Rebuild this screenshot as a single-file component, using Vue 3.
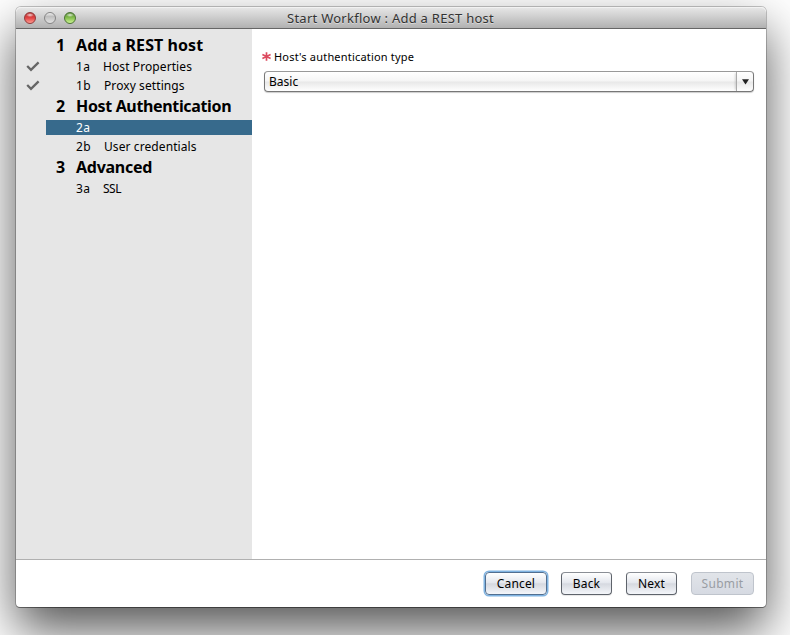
<script setup>
const groups = [
  { n: '1', title: 'Add a REST host', cls: 't-rest', items: [
    { n: '1a', label: 'Host Properties', done: true },
    { n: '1b', label: 'Proxy settings', done: true },
  ] },
  { n: '2', title: 'Host Authentication', cls: 't-auth', items: [
    { n: '2a', label: '', active: true },
    { n: '2b', label: 'User credentials' },
  ] },
  { n: '3', title: 'Advanced', cls: 't-adv', items: [{ n: '3a', label: 'SSL', tight: true }] },
]
</script>

<template>
  <div class="desktop">
    <div class="window">
      <header class="titlebar">
        <div class="lights">
          <i class="light red"></i><i class="light gray"></i><i class="light green"></i>
        </div>
        <span class="title">Start Workflow : Add a REST host</span>
      </header>
      <div class="content">
        <nav class="steps">
          <template v-for="g in groups" :key="g.n">
            <div class="group"><span class="gnum">{{ g.n }}</span><span :class="g.cls">{{ g.title }}</span></div>
            <div v-for="s in g.items" :key="s.n" class="step">
              <span class="mark">
                <svg v-if="s.done" width="14" height="12" viewBox="0 0 14 12"><path d="M1.2 5 L5 8.8 L12.6 1.4" fill="none" stroke="#666" stroke-width="2.3" /></svg>
              </span>
              <span class="row" :class="{ active: s.active }"><span class="snum" :class="{ b: s.n.endsWith('b') }">{{ s.n }}</span><span :class="{ tight: s.tight }">{{ s.label }}</span></span>
            </div>
          </template>
        </nav>
        <main class="form">
          <label class="label">
            <svg width="9" height="9" viewBox="0 0 9 9"><path d="M4.5 0.3V8.7M0.4 2.5L8.6 6.5M8.6 2.5L0.4 6.5" stroke="#dc4a5e" stroke-width="1.7" /></svg>
            <span>Host's authentication type</span>
          </label>
          <div class="select">
            <span class="value">Basic</span>
            <span class="arrow"><svg width="7" height="6" viewBox="0 0 7 6"><path d="M0 .3H7L3.5 5.6Z" fill="#222" /></svg></span>
          </div>
        </main>
      </div>
      <footer class="footer">
        <button class="btn wide focus">Cancel</button>
        <button class="btn">Back</button>
        <button class="btn">Next</button>
        <button class="btn wide disabled">Submit</button>
      </footer>
    </div>
  </div>
</template>

<style>
body { overflow: hidden; background: #fff; }
</style>
<style scoped>
* { box-sizing: border-box; }
.desktop { width: 790px; height: 635px; padding: 7px 0 0 16px; overflow: hidden; font-family: "Noto Sans", "Open Sans", sans-serif; color: #000; }
.window { width: 750px; height: 600px; display: flex; flex-direction: column; background: #fff; border-radius: 5px 5px 4px 4px; box-shadow: 0 0 0 1px rgba(0,0,0,.22), 0 1px 0 rgba(0,0,0,.3), 0 23px 50px rgba(0,0,0,.67); }
.titlebar { height: 22px; flex: none; display: flex; align-items: center; border-bottom: 1px solid #666; border-radius: 5px 5px 0 0; background: linear-gradient(#e8e8e8, #b1b1b1); box-shadow: inset 0 1px #f2f2f2; }
.lights { display: flex; gap: 8px; padding-left: 8px; }
.light { width: 12px; height: 12px; border-radius: 50%; border: 1px solid #777; }
.red { background: radial-gradient(ellipse 4px 2px at 50% 20%, rgba(255,255,255,.8), transparent), linear-gradient(#b93432, #e24444 50%, #ff9c91); border-color: #91383a; }
.gray { background: linear-gradient(#eee, #bebebe 35%, #e3e3e3); border-color: #858585; }
.green { background: radial-gradient(ellipse 4px 2px at 50% 20%, rgba(255,255,255,.8), transparent), linear-gradient(#5a8e36, #86c04f 50%, #cdf594); border-color: #4b7335; }
.title { padding-left: 211px; font-size: 13px; letter-spacing: .26px; line-height: 20px; color: #333; white-space: nowrap; text-shadow: 0 1px rgba(255,255,255,.45); }
.content { height: 530px; flex: none; display: flex; }
.steps { width: 236px; background: #e6e6e6; padding-top: 5px; }
.group { height: 23px; display: flex; padding-left: 40px; font-size: 16px; font-weight: 700; line-height: 22px; white-space: nowrap; }
.gnum { width: 20px; }
.t-rest { letter-spacing: .06px; }
.t-auth { letter-spacing: -.35px; }
.t-adv { letter-spacing: -.27px; }
.step { height: 19px; display: flex; align-items: center; }
.mark { width: 30px; padding-left: 10px; display: flex; }
.row { flex: 1; height: 15px; display: flex; padding-left: 30px; font-size: 12px; letter-spacing: .09px; line-height: 15px; white-space: nowrap; }
.snum { width: 27px; letter-spacing: .4px; }
.snum.b { width: 28px; }
.tight { letter-spacing: -.5px; }
.active { background: #376a8c; color: #fff; }
.form { flex: 1; padding: 19px 12px 0; }
.label { height: 16px; display: flex; align-items: center; gap: 3px; font-size: 11px; letter-spacing: .19px; margin-left: -2px; }
.select { height: 21px; margin-top: 7px; display: flex; border: 1px solid #777; border-top-color: #999; border-radius: 4px; box-shadow: 0 1px 1px rgba(0,0,0,.2); background: linear-gradient(#fff, #f5f5f5 48%, #e8e8e8 52%, #fff); }
.value { flex: 1; padding-left: 4px; font-size: 12px; line-height: 19px; }
.arrow { width: 17px; display: flex; align-items: center; justify-content: center; border-left: 1px solid #aaa; box-shadow: -2px 0 2px -1px rgba(0,0,0,.15); }
.footer { height: 48px; flex: none; border-top: 1px solid #b0b0b0; display: flex; justify-content: flex-end; align-items: center; gap: 14px; padding: 0 12px 0 0; }
.btn { width: 51px; height: 23px; padding: 0; font: 12px/20px "Noto Sans", sans-serif; letter-spacing: .15px; color: #000; border: 1px solid #5e636b; border-top-color: #8a8e95; border-radius: 4px; background: linear-gradient(#fff, #e5e8ee 45%, #d6d9e0 52%, #f4f6fa); box-shadow: 0 1px 1px rgba(0,0,0,.1); }
.wide { width: 63px; }
.focus { width: 62px; border-color: #526f90; box-shadow: 0 0 0 1.5px #80b4e2; }
.disabled { color: #999da3; border-color: #bfc4cc; background: linear-gradient(#e1e4e9, #d6dae2); box-shadow: none; letter-spacing: .3px; }
</style>
